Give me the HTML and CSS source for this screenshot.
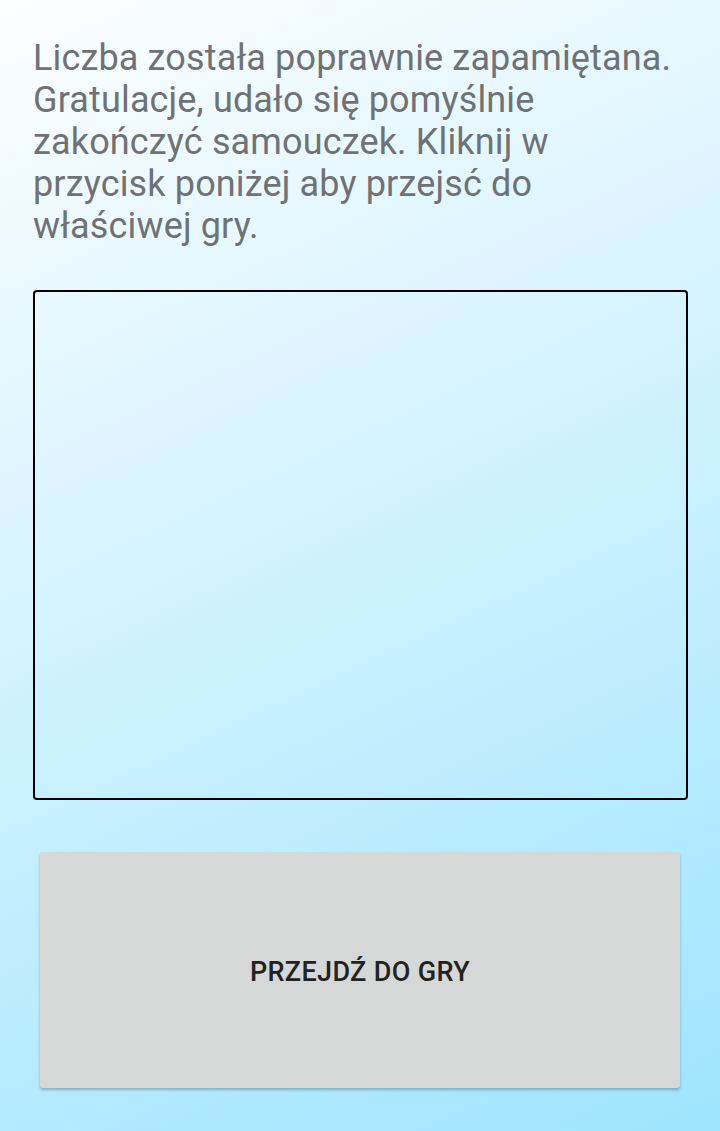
FILE: index.html
```html
<!DOCTYPE html>
<html lang="pl">
<head>
<meta charset="utf-8">
<link rel="stylesheet" href="styles.css">
</head>
<body>
<main class="screen">
  <p class="message">Liczba została poprawnie zapamiętana. Gratulacje, udało się pomyślnie zakończyć samouczek. Kliknij w przycisk poniżej aby przejsć do właściwej gry.</p>
  <div class="board"></div>
  <button class="play-btn">PRZEJDŹ DO GRY</button>
</main>
</body>
</html>
```
FILE: styles.css
```css
html, body {
  margin: 0;
  padding: 0;
  height: 100%;
}
body {
  background: linear-gradient(155deg, #fdfeff 0%, #9ee4fe 100%);
  font-family: Roboto, "Noto Sans", sans-serif;
}
.screen {
  display: flex;
  flex-direction: column;
  height: 1131px;
  box-sizing: border-box;
  padding: 37px 32px 0 33px;
}
.message {
  margin: 0;
  font-size: 36px;
  line-height: 42px;
  letter-spacing: 0.15px;
  color: #6f7275;
  width: 645px;
}
.board {
  margin-top: 43px;
  width: 651px;
  height: 506px;
  border: 2px solid #000;
  border-radius: 4px;
  box-sizing: content-box;
}
.play-btn {
  margin: 52px 0 0 7px;
  width: 640px;
  height: 236px;
  background: #d6d7d7;
  border: none;
  border-radius: 3px;
  box-shadow: 0 2px 3px rgba(0, 0, 0, 0.25);
  font-family: Roboto, "Noto Sans", sans-serif;
  font-weight: 500;
  font-size: 27px;
  letter-spacing: 0.35px;
  color: #222222;
  padding: 4px 0 0;
}
```
